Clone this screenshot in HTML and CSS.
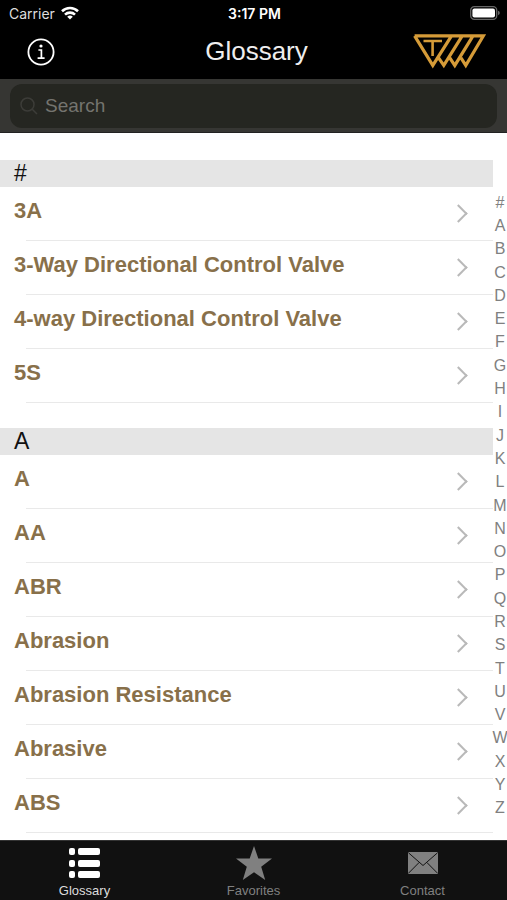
FILE: index.html
```html
<!DOCTYPE html>
<html lang="en">
<head>
  <meta charset="UTF-8">
  <meta name="viewport" content="width=device-width, initial-scale=1">
  <title>Glossary</title>
  <link rel="stylesheet" href="styles.css">
</head>
<body>

  <header>
    <div class="status-bar">
      <div class="carrier">
        <span>Carrier</span>
        <svg width="18" height="14" viewBox="0 0 18 14" fill="none" stroke="#fff" stroke-width="2.6">
          <path d="M1 5.2a11.5 11.5 0 0 1 16 0"/>
          <path d="M4 8.6a7.2 7.2 0 0 1 10 0"/>
          <path d="M9 13.6L6.2 10.8a4 4 0 0 1 5.6 0z" fill="#fff" stroke="none"/>
        </svg>
      </div>
      <div class="time">3:17 PM</div>
      <div class="battery">
        <svg width="30" height="14" viewBox="0 0 30 14">
          <rect x="0.7" y="0.7" width="26" height="12.6" rx="3.6" fill="none" stroke="#666" stroke-width="1.3"/>
          <rect x="2.4" y="2.4" width="22.6" height="9.2" rx="2" fill="#fff"/>
          <path d="M28 4.8q1.8 0.6 1.8 2.2t-1.8 2.2z" fill="#666"/>
        </svg>
      </div>
    </div>

    <div class="nav-bar">
      <button type="button" class="info" aria-label="Info">
        <svg width="28" height="28" viewBox="0 0 28 28" fill="none" stroke="#fff">
          <circle cx="14" cy="14" r="12.6" stroke-width="1.8"/>
          <path d="M11.4 12h3v8M10.6 20.2h7" stroke-width="1.7"/>
          <circle cx="14" cy="8" r="1.6" fill="#fff" stroke="none"/>
        </svg>
      </button>
      <h1>Glossary</h1>
      <div class="logo">
        <svg width="74" height="35" viewBox="0 0 74 35" fill="none" stroke="#d59b38" stroke-width="3.2">
          <path d="M2.6 1.8H71.4L53.8 31.4L49 23.8M2.6 1.8L20.8 31.4L39.5 1.8M26.6 23.8L31.8 31.4L50.2 1.8M37.8 23.8L42.8 31.4L61 1.8"/>
          <path d="M11.5 7H30M20.6 7V22" stroke-width="2.6"/>
        </svg>
      </div>
    </div>
  </header>

  <form class="search-bar">
    <label class="search-box" for="search">
      <svg width="18" height="18" viewBox="0 0 18 18" fill="none" stroke="#3c3c38" stroke-width="1.5" aria-hidden="true">
        <circle cx="7.5" cy="7.5" r="6.5"/>
        <path d="M12.2 12.2L17 17"/>
      </svg>
      <input type="text" id="search" placeholder="Search" aria-label="Search">
    </label>
  </form>

  <main>
    <div class="list">
      <section id="sec-num">
        <h2>#</h2>
        <ul>
          <li><a href="#">3A</a></li>
          <li><a href="#">3-Way Directional Control Valve</a></li>
          <li><a href="#">4-way Directional Control Valve</a></li>
          <li><a href="#">5S</a></li>
        </ul>
      </section>
      <section id="sec-a">
        <h2>A</h2>
        <ul>
          <li><a href="#">A</a></li>
          <li><a href="#">AA</a></li>
          <li><a href="#">ABR</a></li>
          <li><a href="#">Abrasion</a></li>
          <li><a href="#">Abrasion Resistance</a></li>
          <li><a href="#">Abrasive</a></li>
          <li><a href="#">ABS</a></li>
        </ul>
      </section>
    </div>

    <nav class="letters">
      <a href="#sec-num">#</a>
      <a href="#sec-a">A</a>
      <a href="#">B</a>
      <a href="#">C</a>
      <a href="#">D</a>
      <a href="#">E</a>
      <a href="#">F</a>
      <a href="#">G</a>
      <a href="#">H</a>
      <a href="#">I</a>
      <a href="#">J</a>
      <a href="#">K</a>
      <a href="#">L</a>
      <a href="#">M</a>
      <a href="#">N</a>
      <a href="#">O</a>
      <a href="#">P</a>
      <a href="#">Q</a>
      <a href="#">R</a>
      <a href="#">S</a>
      <a href="#">T</a>
      <a href="#">U</a>
      <a href="#">V</a>
      <a href="#">W</a>
      <a href="#">X</a>
      <a href="#">Y</a>
      <a href="#">Z</a>
    </nav>
  </main>

  <nav class="tab-bar">
    <a href="#" class="active">
      <svg width="32" height="32" viewBox="0 0 32 32" fill="currentColor">
        <rect x="0" y="1" width="6" height="7" rx="2"/>
        <rect x="9" y="1" width="22" height="7" rx="2"/>
        <rect x="0" y="13" width="6" height="7" rx="2"/>
        <rect x="9" y="13" width="22" height="7" rx="2"/>
        <rect x="0" y="24" width="6" height="7" rx="2"/>
        <rect x="9" y="24" width="22" height="7" rx="2"/>
      </svg>
      <span>Glossary</span>
    </a>
    <a href="#">
      <svg width="36" height="34" viewBox="0 0 36 34" fill="currentColor">
        <path d="M18 0L22.3 12.4H36L25.2 20.8L29.2 34L18 26.2L6.8 34L10.8 20.8L0 12.4H13.7z"/>
      </svg>
      <span>Favorites</span>
    </a>
    <a href="#">
      <svg width="30" height="22" viewBox="0 0 30 22" fill="currentColor">
        <rect width="30" height="22" rx="1"/>
        <path d="M0.5 0.8L15 13.5L29.5 0.8M0.5 21.2L11.2 10.4M29.5 21.2L18.8 10.4" fill="none" stroke="#111" stroke-width="1"/>
      </svg>
      <span>Contact</span>
    </a>
  </nav>

</body>
</html>
```
FILE: styles.css
```css
* {
  box-sizing: border-box;
}

body {
  margin: 0;
  height: 100vh;
  display: flex;
  flex-direction: column;
  overflow: hidden;
  background: #fff;
  font-family: "Liberation Sans", Arial, sans-serif;
}

a {
  text-decoration: none;
}

svg {
  display: block;
}

header {
  background: #000;
  color: #fff;
}

.status-bar, .nav-bar {
  display: grid;
  grid-template-columns: 1fr auto 1fr;
  align-items: center;
}

.status-bar {
  height: 26px;
  padding: 0 7px 0 9px;
  font-family: Inter, sans-serif;
  font-size: 14px;
}

.carrier {
  display: flex;
  align-items: center;
  gap: 6px;
  color: #ddd;
}

.time {
  font-weight: 600;
}

.battery, .logo {
  justify-self: end;
}

.nav-bar {
  height: 53px;
  padding: 0 21px 2px 27px;
}

.info {
  justify-self: start;
  padding: 0;
  border: none;
  background: none;
  cursor: pointer;
}

h1 {
  margin: 0;
  color: #eee;
  font-size: 26px;
  font-weight: normal;
}

.search-bar {
  margin: 0;
  padding: 5px 10px 4px;
  background: #363633;
  border-bottom: 1px solid #222;
}

.search-box {
  display: flex;
  align-items: center;
  gap: 7px;
  height: 44px;
  padding: 0 10px;
  border-radius: 12px;
  background: #252621;
}

.search-box input {
  flex: 1;
  min-width: 0;
  padding: 0;
  border: none;
  outline: none;
  background: none;
  color: #ddd;
  font-family: inherit;
  font-size: 19px;
}

.search-box input::placeholder {
  color: #74746f;
}

main {
  flex: 1;
  min-height: 0;
  display: flex;
}

.list {
  flex: 1;
  overflow: hidden;
  padding-top: 27px;
}

section {
  margin-bottom: 25px;
}

h2 {
  margin: 0;
  padding-left: 14px;
  background: #e5e5e5;
  color: #111;
  font-size: 23px;
  font-weight: normal;
  line-height: 27px;
}

ul {
  margin: 0;
  padding: 0;
  list-style: none;
}

li a {
  display: flex;
  align-items: center;
  height: 54px;
  padding: 0 28px 6px 14px;
  background: linear-gradient(#e9e9e9, #e9e9e9) 26px 100% / 100% 1px no-repeat;
  color: #88704a;
  font-size: 22px;
  font-weight: bold;
}

li a::after {
  content: "";
  width: 11px;
  height: 11px;
  margin: 4px 0 0 auto;
  border: solid #b9b9b9;
  border-width: 2px 2px 0 0;
  transform: rotate(45deg);
}

.letters {
  width: 14px;
  padding: 58px 0 20px;
  display: flex;
  flex-direction: column;
}

.letters a {
  flex: 1;
  display: flex;
  align-items: center;
  justify-content: center;
  color: #808080;
  font-size: 16px;
  line-height: 20px;
}

.tab-bar {
  display: grid;
  grid-template-columns: repeat(3, 1fr);
  height: 60px;
  border-top: 1px solid #333;
  background: #111;
}

.tab-bar a {
  display: grid;
  grid-template-rows: 43px 14px;
  place-items: center;
  color: #808080;
  font-size: 13px;
  line-height: 14px;
}

.tab-bar .active {
  color: #ddd;
}

.tab-bar .active svg {
  color: #fff;
}
```
